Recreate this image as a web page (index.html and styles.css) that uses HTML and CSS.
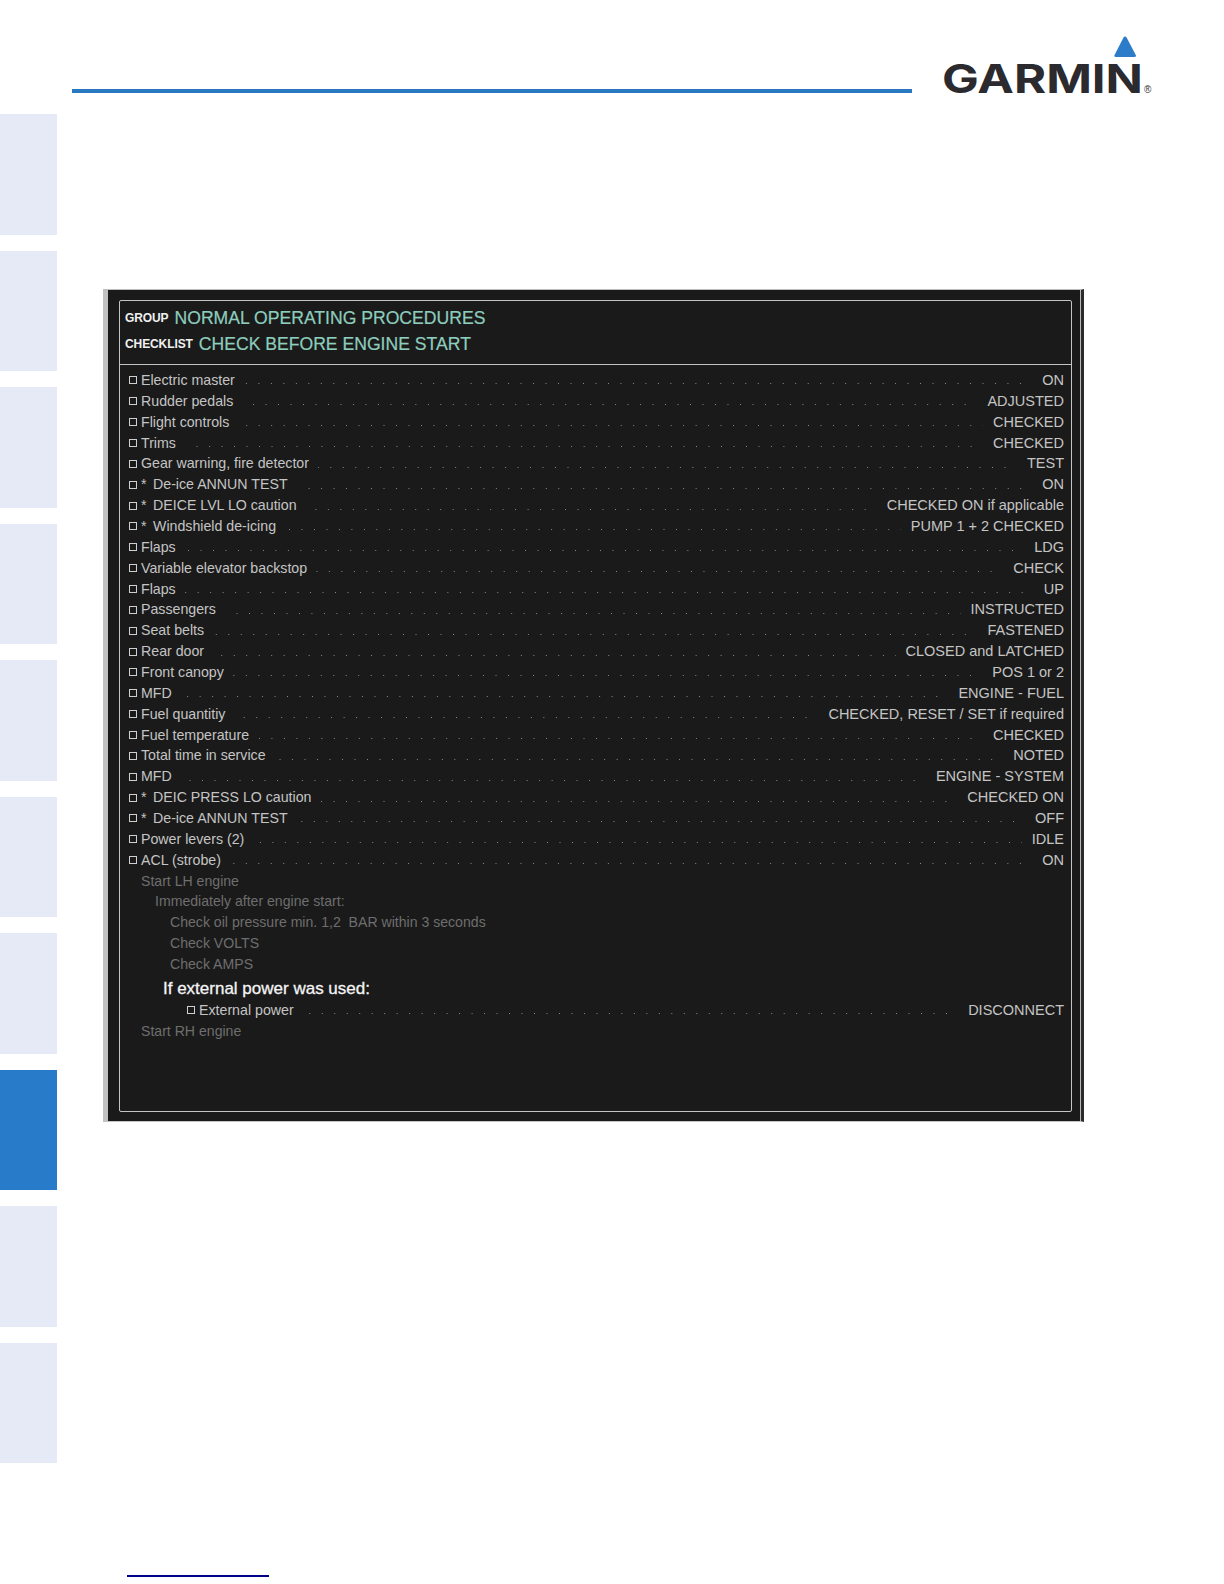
FILE: index.html
```html
<!DOCTYPE html>
<html lang="en">
<head>
<meta charset="utf-8">
<title>Check Before Engine Start</title>
<link rel="stylesheet" href="styles.css">
</head>
<body>
<div class="page">
  <nav class="tabs">
    <div class="tab"></div><div class="tab"></div><div class="tab"></div><div class="tab"></div>
    <div class="tab"></div><div class="tab"></div><div class="tab"></div>
    <div class="tab tab-active"></div>
    <div class="tab"></div><div class="tab"></div>
  </nav>
  <main class="main">
    <header class="head">
      <div class="rule"></div>
      <svg class="logo" width="220" height="76" viewBox="0 0 220 76" role="img" aria-label="Garmin">
        <path class="logo-tri" d="M183.600 7.500 L192.500 24.500 Q194 27 191 27 L173 27 Q170.500 27 171.800 24.500 L180.500 7.500 Q182 5.500 183.600 7.500 Z"/>
        <text class="logo-word" x="-1" y="62.500" textLength="201" lengthAdjust="spacingAndGlyphs">GARMIN</text>
        <text class="logo-reg" x="201" y="63">®</text>
      </svg>
    </header>
    <section class="panel">
      <div class="frame">
        <div class="titles">
          <div class="title-line"><span class="title-key">GROUP</span><span class="title-val">NORMAL OPERATING PROCEDURES</span></div>
          <div class="title-line"><span class="title-key">CHECKLIST</span><span class="title-val">CHECK BEFORE ENGINE START</span></div>
        </div>
        <ul class="items">
          <li class="row"><i class="box"></i><span>Electric master</span><b class="lead"></b><span class="val">ON</span></li>
          <li class="row"><i class="box"></i><span>Rudder pedals</span><b class="lead"></b><span class="val">ADJUSTED</span></li>
          <li class="row"><i class="box"></i><span>Flight controls</span><b class="lead"></b><span class="val">CHECKED</span></li>
          <li class="row"><i class="box"></i><span>Trims</span><b class="lead"></b><span class="val">CHECKED</span></li>
          <li class="row"><i class="box"></i><span>Gear warning, fire detector</span><b class="lead"></b><span class="val">TEST</span></li>
          <li class="row"><i class="box"></i><span class="star">*</span><span>De-ice ANNUN TEST</span><b class="lead"></b><span class="val">ON</span></li>
          <li class="row"><i class="box"></i><span class="star">*</span><span>DEICE LVL LO caution</span><b class="lead"></b><span class="val">CHECKED ON if applicable</span></li>
          <li class="row"><i class="box"></i><span class="star">*</span><span>Windshield de-icing</span><b class="lead"></b><span class="val">PUMP 1 + 2 CHECKED</span></li>
          <li class="row"><i class="box"></i><span>Flaps</span><b class="lead"></b><span class="val">LDG</span></li>
          <li class="row"><i class="box"></i><span>Variable elevator backstop</span><b class="lead"></b><span class="val">CHECK</span></li>
          <li class="row"><i class="box"></i><span>Flaps</span><b class="lead"></b><span class="val">UP</span></li>
          <li class="row"><i class="box"></i><span>Passengers</span><b class="lead"></b><span class="val">INSTRUCTED</span></li>
          <li class="row"><i class="box"></i><span>Seat belts</span><b class="lead"></b><span class="val">FASTENED</span></li>
          <li class="row"><i class="box"></i><span>Rear door</span><b class="lead"></b><span class="val">CLOSED and LATCHED</span></li>
          <li class="row"><i class="box"></i><span>Front canopy</span><b class="lead"></b><span class="val">POS 1 or 2</span></li>
          <li class="row"><i class="box"></i><span>MFD</span><b class="lead"></b><span class="val">ENGINE - FUEL</span></li>
          <li class="row"><i class="box"></i><span>Fuel quantitiy</span><b class="lead"></b><span class="val">CHECKED, RESET / SET if required</span></li>
          <li class="row"><i class="box"></i><span>Fuel temperature</span><b class="lead"></b><span class="val">CHECKED</span></li>
          <li class="row"><i class="box"></i><span>Total time in service</span><b class="lead"></b><span class="val">NOTED</span></li>
          <li class="row"><i class="box"></i><span>MFD</span><b class="lead"></b><span class="val">ENGINE - SYSTEM</span></li>
          <li class="row"><i class="box"></i><span class="star">*</span><span>DEIC PRESS LO caution</span><b class="lead"></b><span class="val">CHECKED ON</span></li>
          <li class="row"><i class="box"></i><span class="star">*</span><span>De-ice ANNUN TEST</span><b class="lead"></b><span class="val">OFF</span></li>
          <li class="row"><i class="box"></i><span>Power levers (2)</span><b class="lead"></b><span class="val">IDLE</span></li>
          <li class="row"><i class="box"></i><span>ACL (strobe)</span><b class="lead"></b><span class="val">ON</span></li>
          <li class="note note-1">Start LH engine</li>
          <li class="note note-2">Immediately after engine start:</li>
          <li class="note note-3">Check oil pressure min. 1,2&nbsp; BAR within 3 seconds</li>
          <li class="note note-3">Check VOLTS</li>
          <li class="note note-3">Check AMPS</li>
          <li class="subhead">If external power was used:</li>
          <li class="row row-sub"><i class="box"></i><span>External power</span><b class="lead"></b><span class="val">DISCONNECT</span></li>
          <li class="note note-1">Start RH engine</li>
        </ul>
      </div>
    </section>
    <div class="foot-link"></div>
  </main>
</div>
</body>
</html>
```

FILE: styles.css
```css
* { box-sizing: border-box; }
html, body { margin: 0; padding: 0; background: #fff; }
body { font-family: "Liberation Sans", Arial, sans-serif; }
.page { display: flex; width: 1224px; height: 1584px; overflow: hidden; }

.tabs { width: 57px; flex: none; padding-top: 114px; display: flex; flex-direction: column; gap: 16px; }
.tab { height: 120.500px; background: #e6eaf6; }
.tab-active { background: #277bc8; }

.main { flex: 1; min-width: 0; display: flex; flex-direction: column; }
.head { height: 100px; display: flex; align-items: flex-start; padding: 30px 0 0 15px; }
.rule { width: 840px; height: 4px; margin-top: 59px; background: #2a78c0; }
.logo { margin-left: 31px; flex: none; }
.logo-tri { fill: #2c7cc9; }
.logo-word { font-family: "Inter", sans-serif; font-weight: 700; font-size: 40px; fill: #2a2a2f; }
.logo-reg { font-family: "Liberation Sans", sans-serif; font-size: 10px; fill: #333; }

.panel { width: 981px; height: 833px; margin: 189px 0 0 46px; padding: 10px 9px 9px 11px; background: #1a1a1a;
  border-left: 5px solid #c2c2c2; border-top: 1px solid #bdbdbd; border-bottom: 1px solid #c4c4c4; border-right: 3px solid #2c2c2c;
  box-shadow: inset -1px 0 0 #b8b8b8; flex: none; }
.frame { height: 100%; border: 1px solid #c4c4c4; border-radius: 2px; }

.titles { height: 64px; padding-top: 4px; border-bottom: 1px solid #c4c4c4; }
.title-line { display: flex; align-items: center; height: 26px; padding-left: 5px; }
.title-key { font-weight: 700; font-size: 12px; letter-spacing: -0.100px; color: #f0f0f0; margin-right: 6px; }
.title-val { font-size: 17.600px; color: #8dcdbd; -webkit-text-stroke: 0.200px #8dcdbd; }

.items { list-style: none; margin: 0; padding: 5px 7px 0 9px; font-size: 14.200px; line-height: 20.860px; color: #c4c4c4; }
.row { display: flex; align-items: center; height: 20.860px; white-space: nowrap; }
.val { font-size: 14.500px; }
.box { width: 8px; height: 8px; border: 1px solid #cfcfcf; margin-right: 4px; flex: none; }
.star { width: 12px; flex: none; }
.lead { flex: 1; height: 1px; margin: 7px 10px 0 9px; background-image: linear-gradient(90deg, #8a8a8a 1px, transparent 1px);
  background-size: 12.490px 1px; background-position: right top; }
.note { height: 20.860px; line-height: 21.500px; font-size: 14.100px; color: #6e6e6e; }
.note-1 { padding-left: 12px; }
.note-2 { padding-left: 26px; }
.note-3 { padding-left: 41px; }
.subhead { height: 25px; line-height: 27px; padding-left: 34px; font-size: 17px; color: #f4f4f4; -webkit-text-stroke: 0.300px #f4f4f4; }
.row-sub { padding-left: 58px; }

.foot-link { width: 142px; height: 2px; margin: 453px 0 0 70px; background: #00008b; flex: none; }
```
